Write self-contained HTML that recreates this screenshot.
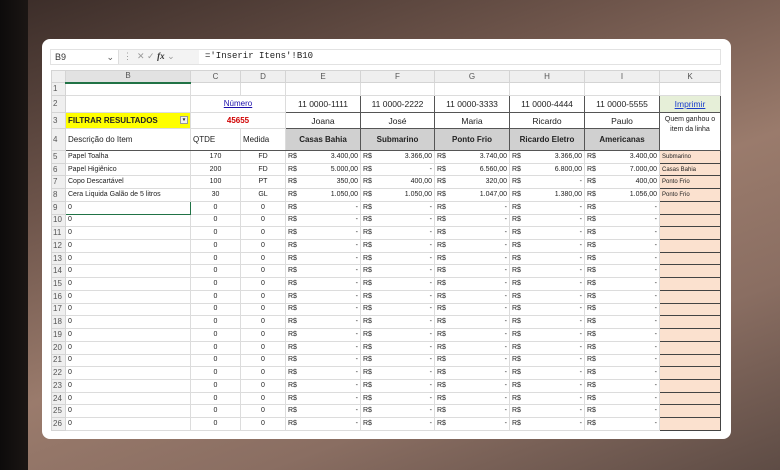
<!DOCTYPE html>
<html><head><meta charset="utf-8"><style>
*{margin:0;padding:0;box-sizing:border-box}
body{width:780px;height:470px;overflow:hidden;position:relative;font-family:"Liberation Sans",sans-serif;
background:linear-gradient(160deg,#3a2c28 0%,#6e554b 30%,#9a7b6c 55%,#8a6e62 75%,#5e4c45 100%);}
.strip{position:absolute;left:0;top:0;width:28px;height:470px;background:linear-gradient(90deg,#0d0b0b,#1b1614)}
.card{position:absolute;left:42px;top:39px;width:689px;height:400px;background:#fff;border-radius:8px}
.fbar{position:absolute;left:50px;top:49px;width:671px;height:16px;background:#f3f3f3;border:1px solid #e2e2e2;font-size:9px;color:#333}
.fbar .nb{position:absolute;left:0;top:0;width:68px;height:14px;background:#fff;border-right:1px solid #ddd;padding:2px 4px}
.fbar .ic{position:absolute;left:72px;top:1px;color:#999;font-size:9px}
.fbar .fx{position:absolute;left:148px;top:0;right:0;height:14px;background:#fff;padding:1px 6px;font-family:"Liberation Mono",monospace;font-size:9px;color:#222}
table{position:absolute;left:51px;top:70px;border-collapse:collapse;table-layout:fixed;font-size:7px;color:#222}
td{border:1px solid #dcdcdc;overflow:hidden;white-space:nowrap;padding:0 2px;height:12.73px;line-height:10px;vertical-align:middle}
tr.ch td{background:#efefef;color:#555;text-align:center;font-size:8px;height:12px;border-color:#d4d4d4}
td.rh{background:#efefef;color:#555;font-size:8px;padding:0 1px;border-color:#d4d4d4}
.c{text-align:center}
.r{text-align:right}
.m{display:flex;justify-content:space-between}
.dk{border:1px solid #555}
.g{background:#d0d0d0;font-weight:bold;text-align:center;font-size:8px}
.k{background:#fbe1cf;border:1px solid #444;font-size:6px}
.ph{text-align:center;font-size:8.5px}
</style></head><body>
<div class="strip"></div>
<div class="card"></div>
<div class="fbar"><div class="nb">B9 <span style="float:right;color:#555">⌄</span></div><div class="ic">⋮ &nbsp;✕ ✓ <i style="font-family:'Liberation Serif';color:#333;font-weight:bold">fx</i> ⌄</div><div class="fx">='Inserir Itens'!B10</div></div>
<table>
<colgroup><col style="width:14px"><col style="width:125px"><col style="width:50px"><col style="width:45px"><col style="width:75px"><col style="width:74px"><col style="width:75px"><col style="width:75px"><col style="width:75px"><col style="width:61px"></colgroup>
<tr class="ch"><td></td><td style="border-bottom:2px solid #217346;background:#e2e2e2">B</td><td>C</td><td>D</td><td>E</td><td>F</td><td>G</td><td>H</td><td>I</td><td>K</td></tr>
<tr style="height:13px"><td class="rh">1</td><td></td><td></td><td></td><td></td><td></td><td></td><td></td><td></td><td></td></tr>
<tr style="height:17px"><td class="rh" style="height:17px">2</td><td style="border-top:1px solid #555"></td><td colspan="2" class="c" style="border-top:1px solid #555;font-size:8px"><u style="color:#1a0dab">Número</u></td><td class="dk ph">11 0000-1111</td><td class="dk ph">11 0000-2222</td><td class="dk ph">11 0000-3333</td><td class="dk ph">11 0000-4444</td><td class="dk ph">11 0000-5555</td><td class="dk c" style="background:#e6efd8;font-size:8.5px"><u style="color:#1a3ecc">Imprimir</u></td></tr>
<tr style="height:16px"><td class="rh" style="height:16px">3</td><td style="background:#ffff00;font-weight:bold;font-size:8px;position:relative">FILTRAR RESULTADOS<span style="position:absolute;right:2px;top:3px;width:8px;height:8px;background:#f2f2f2;border:1px solid #999;font-size:5px;line-height:6px;text-align:center">▾</span></td><td colspan="2" class="c" style="color:#d00000;font-weight:bold;font-size:8px">45655</td><td class="dk ph">Joana</td><td class="dk ph">José</td><td class="dk ph">Maria</td><td class="dk ph">Ricardo</td><td class="dk ph">Paulo</td><td rowspan="2" class="dk c" style="font-size:7px;line-height:10px;vertical-align:top;padding-top:2px;white-space:normal">Quem ganhou o item da linha</td></tr>
<tr style="height:22px"><td class="rh" style="height:22px">4</td><td style="font-size:8px;border-bottom:1px solid #555">Descrição do Item</td><td style="font-size:8px;border-bottom:1px solid #555">QTDE</td><td style="font-size:8px;border-bottom:1px solid #555">Medida</td><td class="dk g">Casas Bahia</td><td class="dk g">Submarino</td><td class="dk g">Ponto Frio</td><td class="dk g">Ricardo Eletro</td><td class="dk g">Americanas</td></tr>
<tr><td class="rh">5</td><td>Papel Toalha</td><td class="c">170</td><td class="c">FD</td><td><div class="m"><span>R$</span><span>3.400,00</span></div></td><td><div class="m"><span>R$</span><span>3.366,00</span></div></td><td><div class="m"><span>R$</span><span>3.740,00</span></div></td><td><div class="m"><span>R$</span><span>3.366,00</span></div></td><td><div class="m"><span>R$</span><span>3.400,00</span></div></td><td class="k">Submarino</td></tr>
<tr><td class="rh">6</td><td>Papel Higiênico</td><td class="c">200</td><td class="c">FD</td><td><div class="m"><span>R$</span><span>5.000,00</span></div></td><td><div class="m"><span>R$</span><span>-</span></div></td><td><div class="m"><span>R$</span><span>6.560,00</span></div></td><td><div class="m"><span>R$</span><span>6.800,00</span></div></td><td><div class="m"><span>R$</span><span>7.000,00</span></div></td><td class="k">Casas Bahia</td></tr>
<tr><td class="rh">7</td><td>Copo Descartável</td><td class="c">100</td><td class="c">PT</td><td><div class="m"><span>R$</span><span>350,00</span></div></td><td><div class="m"><span>R$</span><span>400,00</span></div></td><td><div class="m"><span>R$</span><span>320,00</span></div></td><td><div class="m"><span>R$</span><span>-</span></div></td><td><div class="m"><span>R$</span><span>400,00</span></div></td><td class="k">Ponto Frio</td></tr>
<tr><td class="rh">8</td><td>Cera Liquida Galão de 5 litros</td><td class="c">30</td><td class="c">GL</td><td><div class="m"><span>R$</span><span>1.050,00</span></div></td><td><div class="m"><span>R$</span><span>1.050,00</span></div></td><td><div class="m"><span>R$</span><span>1.047,00</span></div></td><td><div class="m"><span>R$</span><span>1.380,00</span></div></td><td><div class="m"><span>R$</span><span>1.056,00</span></div></td><td class="k">Ponto Frio</td></tr>
<tr><td class="rh">9</td><td style="border:1.5px solid #217346">0</td><td class="c">0</td><td class="c">0</td><td><div class="m"><span>R$</span><span>-</span></div></td><td><div class="m"><span>R$</span><span>-</span></div></td><td><div class="m"><span>R$</span><span>-</span></div></td><td><div class="m"><span>R$</span><span>-</span></div></td><td><div class="m"><span>R$</span><span>-</span></div></td><td class="k"></td></tr>
<tr><td class="rh">10</td><td>0</td><td class="c">0</td><td class="c">0</td><td><div class="m"><span>R$</span><span>-</span></div></td><td><div class="m"><span>R$</span><span>-</span></div></td><td><div class="m"><span>R$</span><span>-</span></div></td><td><div class="m"><span>R$</span><span>-</span></div></td><td><div class="m"><span>R$</span><span>-</span></div></td><td class="k"></td></tr>
<tr><td class="rh">11</td><td>0</td><td class="c">0</td><td class="c">0</td><td><div class="m"><span>R$</span><span>-</span></div></td><td><div class="m"><span>R$</span><span>-</span></div></td><td><div class="m"><span>R$</span><span>-</span></div></td><td><div class="m"><span>R$</span><span>-</span></div></td><td><div class="m"><span>R$</span><span>-</span></div></td><td class="k"></td></tr>
<tr><td class="rh">12</td><td>0</td><td class="c">0</td><td class="c">0</td><td><div class="m"><span>R$</span><span>-</span></div></td><td><div class="m"><span>R$</span><span>-</span></div></td><td><div class="m"><span>R$</span><span>-</span></div></td><td><div class="m"><span>R$</span><span>-</span></div></td><td><div class="m"><span>R$</span><span>-</span></div></td><td class="k"></td></tr>
<tr><td class="rh">13</td><td>0</td><td class="c">0</td><td class="c">0</td><td><div class="m"><span>R$</span><span>-</span></div></td><td><div class="m"><span>R$</span><span>-</span></div></td><td><div class="m"><span>R$</span><span>-</span></div></td><td><div class="m"><span>R$</span><span>-</span></div></td><td><div class="m"><span>R$</span><span>-</span></div></td><td class="k"></td></tr>
<tr><td class="rh">14</td><td>0</td><td class="c">0</td><td class="c">0</td><td><div class="m"><span>R$</span><span>-</span></div></td><td><div class="m"><span>R$</span><span>-</span></div></td><td><div class="m"><span>R$</span><span>-</span></div></td><td><div class="m"><span>R$</span><span>-</span></div></td><td><div class="m"><span>R$</span><span>-</span></div></td><td class="k"></td></tr>
<tr><td class="rh">15</td><td>0</td><td class="c">0</td><td class="c">0</td><td><div class="m"><span>R$</span><span>-</span></div></td><td><div class="m"><span>R$</span><span>-</span></div></td><td><div class="m"><span>R$</span><span>-</span></div></td><td><div class="m"><span>R$</span><span>-</span></div></td><td><div class="m"><span>R$</span><span>-</span></div></td><td class="k"></td></tr>
<tr><td class="rh">16</td><td>0</td><td class="c">0</td><td class="c">0</td><td><div class="m"><span>R$</span><span>-</span></div></td><td><div class="m"><span>R$</span><span>-</span></div></td><td><div class="m"><span>R$</span><span>-</span></div></td><td><div class="m"><span>R$</span><span>-</span></div></td><td><div class="m"><span>R$</span><span>-</span></div></td><td class="k"></td></tr>
<tr><td class="rh">17</td><td>0</td><td class="c">0</td><td class="c">0</td><td><div class="m"><span>R$</span><span>-</span></div></td><td><div class="m"><span>R$</span><span>-</span></div></td><td><div class="m"><span>R$</span><span>-</span></div></td><td><div class="m"><span>R$</span><span>-</span></div></td><td><div class="m"><span>R$</span><span>-</span></div></td><td class="k"></td></tr>
<tr><td class="rh">18</td><td>0</td><td class="c">0</td><td class="c">0</td><td><div class="m"><span>R$</span><span>-</span></div></td><td><div class="m"><span>R$</span><span>-</span></div></td><td><div class="m"><span>R$</span><span>-</span></div></td><td><div class="m"><span>R$</span><span>-</span></div></td><td><div class="m"><span>R$</span><span>-</span></div></td><td class="k"></td></tr>
<tr><td class="rh">19</td><td>0</td><td class="c">0</td><td class="c">0</td><td><div class="m"><span>R$</span><span>-</span></div></td><td><div class="m"><span>R$</span><span>-</span></div></td><td><div class="m"><span>R$</span><span>-</span></div></td><td><div class="m"><span>R$</span><span>-</span></div></td><td><div class="m"><span>R$</span><span>-</span></div></td><td class="k"></td></tr>
<tr><td class="rh">20</td><td>0</td><td class="c">0</td><td class="c">0</td><td><div class="m"><span>R$</span><span>-</span></div></td><td><div class="m"><span>R$</span><span>-</span></div></td><td><div class="m"><span>R$</span><span>-</span></div></td><td><div class="m"><span>R$</span><span>-</span></div></td><td><div class="m"><span>R$</span><span>-</span></div></td><td class="k"></td></tr>
<tr><td class="rh">21</td><td>0</td><td class="c">0</td><td class="c">0</td><td><div class="m"><span>R$</span><span>-</span></div></td><td><div class="m"><span>R$</span><span>-</span></div></td><td><div class="m"><span>R$</span><span>-</span></div></td><td><div class="m"><span>R$</span><span>-</span></div></td><td><div class="m"><span>R$</span><span>-</span></div></td><td class="k"></td></tr>
<tr><td class="rh">22</td><td>0</td><td class="c">0</td><td class="c">0</td><td><div class="m"><span>R$</span><span>-</span></div></td><td><div class="m"><span>R$</span><span>-</span></div></td><td><div class="m"><span>R$</span><span>-</span></div></td><td><div class="m"><span>R$</span><span>-</span></div></td><td><div class="m"><span>R$</span><span>-</span></div></td><td class="k"></td></tr>
<tr><td class="rh">23</td><td>0</td><td class="c">0</td><td class="c">0</td><td><div class="m"><span>R$</span><span>-</span></div></td><td><div class="m"><span>R$</span><span>-</span></div></td><td><div class="m"><span>R$</span><span>-</span></div></td><td><div class="m"><span>R$</span><span>-</span></div></td><td><div class="m"><span>R$</span><span>-</span></div></td><td class="k"></td></tr>
<tr><td class="rh">24</td><td>0</td><td class="c">0</td><td class="c">0</td><td><div class="m"><span>R$</span><span>-</span></div></td><td><div class="m"><span>R$</span><span>-</span></div></td><td><div class="m"><span>R$</span><span>-</span></div></td><td><div class="m"><span>R$</span><span>-</span></div></td><td><div class="m"><span>R$</span><span>-</span></div></td><td class="k"></td></tr>
<tr><td class="rh">25</td><td>0</td><td class="c">0</td><td class="c">0</td><td><div class="m"><span>R$</span><span>-</span></div></td><td><div class="m"><span>R$</span><span>-</span></div></td><td><div class="m"><span>R$</span><span>-</span></div></td><td><div class="m"><span>R$</span><span>-</span></div></td><td><div class="m"><span>R$</span><span>-</span></div></td><td class="k"></td></tr>
<tr><td class="rh">26</td><td>0</td><td class="c">0</td><td class="c">0</td><td><div class="m"><span>R$</span><span>-</span></div></td><td><div class="m"><span>R$</span><span>-</span></div></td><td><div class="m"><span>R$</span><span>-</span></div></td><td><div class="m"><span>R$</span><span>-</span></div></td><td><div class="m"><span>R$</span><span>-</span></div></td><td class="k"></td></tr>
</table>
</body></html>
